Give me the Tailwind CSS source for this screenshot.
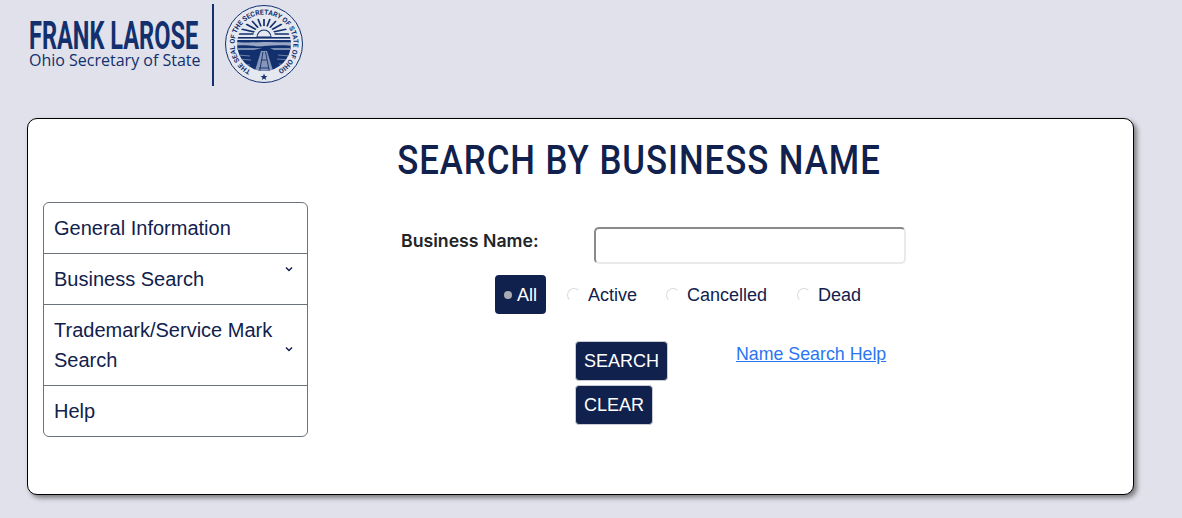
<!DOCTYPE html>
<html lang="en">
<head>
  <meta charset="UTF-8">
  <title>Search by Business Name</title>
  <script src="https://cdn.jsdelivr.net/npm/@tailwindcss/browser@4"></script>
</head>
<body class="bg-[#e0e1ea] h-[518px] overflow-hidden font-['Liberation_Sans',sans-serif] text-[#11214d]">
  <!-- header logo -->
  <header class="h-[118px] pl-[29px] flex items-start text-[#12306e]">
    <div class="w-[172px] pt-[20px]">
      <div class="h-[32px] w-[270px] origin-left scale-x-[.612] font-['Roboto',sans-serif] font-bold text-[38.5px] leading-[32px] whitespace-nowrap">FRANK LAROSE</div>
      <div class="font-['Open_Sans',sans-serif] text-[16px] leading-[17px] whitespace-nowrap font-normal w-[172px]">Ohio Secretary of State</div>
    </div>
    <div class="ml-[11px] mt-[4px] w-[2px] h-[82px] bg-[#12306e]"></div>
    <svg class="ml-[10px] mt-[4px]" width="80" height="80" viewBox="0 0 80 80">
      <defs>
        <path id="sealText" d="M40 40 m-29.5 0 a29.5 29.5 0 1 1 59 0 a29.5 29.5 0 1 1 -59 0" transform="rotate(-64 40 40)"/>
        <clipPath id="inner"><circle cx="40" cy="40" r="27"/></clipPath>
      </defs>
      <circle cx="40" cy="40" r="38.5" fill="#e6e8f0" stroke="#12306e" stroke-width="1"/>
      <text font-family="Roboto, sans-serif" font-weight="700" font-size="6.9" fill="#12306e"><textPath href="#sealText">THE SEAL OF THE SECRETARY OF STATE OF OHIO</textPath></text>
      <path d="M40 69.500l1 2.400 2.500.1-2 1.500.8 2.400-2.300-1.400-2.200 1.400.7-2.400-2-1.500 2.600-.1z" fill="#12306e"/>
      <g clip-path="url(#inner)">
        <rect x="10" y="10" width="60" height="60" fill="#e6e8f0"/>
        <g stroke="#12306e" stroke-width="1.700">
          <path d="M40 30V15M40 30L34 15M40 30L46 15M40 30L28 17M40 30L52 17M40 30L22 20M40 30L58 20M40 30L17 25M40 30L63 25M40 30L14 30M40 30L66 30"/>
        </g>
        <path d="M29 33a11 11 0 0 1 22 0z" fill="#e6e8f0"/>
        <path d="M33 33a7 7 0 0 1 14 0z" fill="#e6e8f0" stroke="#12306e" stroke-width="1.100"/>
        <rect x="10" y="33" width="60" height="1.600" fill="#12306e"/>
        <path d="M10 37h60v5H10z" fill="#9aa6c4"/>
        <path d="M10 36h60v2c-10 1-20-.5-30 0s-20 1-30-.5zM10 42c12-2 20 1 30 0s20-1 30 0v28H10z" fill="#12306e"/>
        <path d="M14 44h24l-8 2H14zM46 44h20v2H50z" fill="#7f8fb3"/>
        <path d="M37 47h6l7 23H30z" fill="#8796b8"/>
        <path d="M39 48l-3.500 20M41.500 48l4 20M37.500 56h5M35 64h10" stroke="#12306e" stroke-width=".9"/>
        <path d="M14 51l12 1M12 55l15 1M13 60l13 1M54 51l12 1M53 55l14 1M55 60l12 1" stroke="#6f80a8" stroke-width="1"/>
      </g>
    </svg>
  </header>

  <main class="ml-[27px] w-[1107px] h-[377px] bg-white border border-black rounded-[10px] shadow-[3px_3px_5px_rgba(0,0,0,.45)]">
    <h1 class="h-[83px] pl-[116px] pt-[18px] flex justify-center font-['Roboto',sans-serif] font-medium text-[40px] leading-[47px] text-[#11214d]">
      <span class="scale-x-[.87] whitespace-nowrap tracking-[1.1px]">SEARCH BY BUSINESS NAME</span>
    </h1>
    <div class="flex">
      <!-- side menu -->
      <nav class="ml-[15px] w-[265px] h-[235px] border border-[#6c727b] rounded-[6px] text-[20px] leading-[30px] divide-y divide-[#6c727b]">
        <div class="h-[51px] pl-[10px] pt-[10px]">General Information</div>
        <div class="h-[51px] pl-[10px] pt-[10px] flex justify-between">
          <span>Business Search</span>
          <svg class="mr-[14px] mt-[2px]" width="8" height="6" viewBox="0 0 8 6"><path d="M1 1.500l3 3 3-3" fill="none" stroke="#11214d" stroke-width="1.500"/></svg>
        </div>
        <div class="h-[81px] pl-[10px] pt-[10px] flex justify-between items-start">
          <span class="w-[230px]">Trademark/Service Mark Search</span>
          <svg class="mr-[14px] mt-[31px]" width="8" height="6" viewBox="0 0 8 6"><path d="M1 1.500l3 3 3-3" fill="none" stroke="#11214d" stroke-width="1.500"/></svg>
        </div>
        <div class="h-[51px] pl-[10px] pt-[10px]">Help</div>
      </nav>

      <!-- search form -->
      <form class="pt-[25px]">
        <div class="flex items-start">
          <label class="ml-[93px] w-[193px] pt-[3px] font-['Inter',sans-serif] font-semibold text-[17.7px] leading-[22px] text-[#212529]">Business Name:</label>
          <input type="text" class="w-[312px] h-[37px] bg-white rounded-[5px] border-2 border-[#e9e9ea] border-t-[#8a8a8a] border-l-[#8a8a8a]">
        </div>
        <div class="ml-[187px] mt-[11px] h-[39px] flex items-center text-[18px] leading-[28px]">
          <div class="w-[51px] h-[39px] bg-[#11214d] rounded-[4px] flex items-center pl-[9px] pt-[1px] text-white">
            <span class="w-[8px] h-[8px] rounded-full bg-[#a9abb2] mr-[5px]"></span>All
          </div>
          <span class="ml-[21px] w-[14px] h-[14px] rounded-full border border-[#dcdcdc] border-b-white border-r-white"></span>
          <span class="ml-[7px] w-[78px] pt-[1px]">Active</span>
          <span class="w-[14px] h-[14px] rounded-full border border-[#dcdcdc] border-b-white border-r-white"></span>
          <span class="ml-[7px] w-[110px] pt-[1px]">Cancelled</span>
          <span class="w-[14px] h-[14px] rounded-full border border-[#dcdcdc] border-b-white border-r-white"></span>
          <span class="ml-[7px] pt-[1px]">Dead</span>
        </div>
        <div class="ml-[267px] mt-[27px] flex items-start">
          <div class="w-[161px] flex flex-col items-start gap-[4px]">
            <button type="button" class="w-[93px] h-[40px] bg-[#11214d] border border-[#c9cbd3] rounded-[4px] text-white text-[18px]">SEARCH</button>
            <button type="button" class="w-[78px] h-[40px] bg-[#11214d] border border-[#c9cbd3] rounded-[4px] text-white text-[18px]">CLEAR</button>
          </div>
          <a href="#" class="mt-[1px] text-[#2a75f3] text-[17.8px] leading-[24px] underline">Name Search Help</a>
        </div>
      </form>
    </div>
  </main>
</body>
</html>
